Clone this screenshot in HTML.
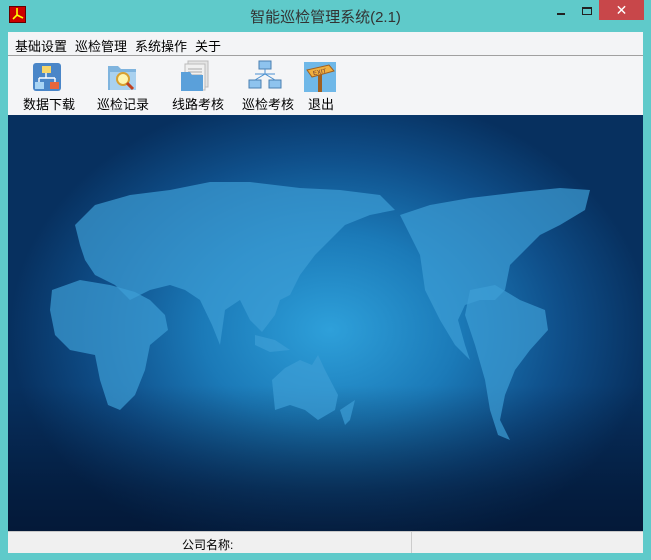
<!DOCTYPE html>
<html><head><meta charset="utf-8"><style>
*{margin:0;padding:0;box-sizing:border-box}
body{width:651px;height:560px;background:#5fcaca;position:relative;overflow:hidden;font-family:"Liberation Sans","Noto Sans CJK SC",sans-serif;font-size:12px;color:#000}
.abs{position:absolute}
.title{left:0;top:6px;width:651px;text-align:center;font-size:15px;color:#333}
.menu{left:8px;top:32px;width:635px;height:24px;background:#f3f4f6;border-bottom:1px solid #a0a0a0}
.menu span{position:absolute;top:4px;font-size:13px}
.tb{left:8px;top:56px;width:635px;height:59px;background:#f4f5f7}
.tb .lbl{position:absolute;top:38px;font-size:13px}
.map{left:8px;top:115px;width:635px;height:416px;background:linear-gradient(180deg,rgba(0,0,0,0) 0%,rgba(0,0,0,0) 65%,rgba(2,15,40,0.55) 90%,rgba(2,15,40,0.7) 100%),radial-gradient(ellipse 320px 240px at 322px 215px,#2ea0da 0%,#1b7ab8 40%,#0f4f8a 72%,#07305f 100%);overflow:hidden}
.status{left:8px;top:531px;width:635px;height:22px;background:#f0f0f0;border-top:1px solid #c8c8c8}
</style></head><body>
<div class="abs" style="left:9px;top:6px;width:17px;height:17px;background:#c00;border:1px solid #600"><svg width="15" height="15"><path d="M7 1V8L3 12M7 8L13 11" stroke="#ff0" stroke-width="1.6" fill="none"/></svg></div>
<div class="abs title">智能巡检管理系统(2.1)</div>
<div class="abs" style="left:557px;top:13px;width:8px;height:2px;background:#222"></div>
<div class="abs" style="left:582px;top:7px;width:10px;height:8px;border:1.5px solid #222;border-top-width:2px"></div>
<div class="abs" style="left:599px;top:0;width:45px;height:20px;background:#c8474a;color:#fff;text-align:center;font-size:14px;line-height:20px">✕</div>
<div class="abs menu"><span style="left:7px">基础设置</span><span style="left:67px">巡检管理</span><span style="left:127px">系统操作</span><span style="left:187px">关于</span></div>
<div class="abs tb">
<svg class="abs" style="left:24px;top:6px" width="30" height="30"><rect x="1" y="1" width="28" height="28" rx="3" fill="#4a86c8"/><rect x="10" y="4" width="9" height="7" fill="#f7d66a"/><path d="M14 11v5M7 16h16M7 16v4M23 16v4" stroke="#fff" stroke-width="1.4" fill="none"/><rect x="3" y="20" width="9" height="7" fill="#a8d4f4"/><rect x="18" y="20" width="9" height="7" fill="#e8663c"/></svg>
<svg class="abs" style="left:98px;top:6px" width="34" height="30"><path d="M2 4h10l3 3h15v21H2z" fill="#7fb4de"/><rect x="4" y="10" width="26" height="18" fill="#a9d1ef"/><circle cx="17" cy="17" r="6" fill="#fff6b0" stroke="#d8a030" stroke-width="2"/><path d="M21 21l6 6" stroke="#c04020" stroke-width="3"/></svg>
<svg class="abs" style="left:172px;top:4px" width="30" height="32"><rect x="8" y="1" width="20" height="26" fill="#e4e4e4" stroke="#bbb"/><rect x="5" y="4" width="20" height="26" fill="#f0f0f0" stroke="#bbb"/><path d="M8 9h14M8 12h14M8 15h14" stroke="#aaa"/><path d="M1 12h9l2 3h11v16H1z" fill="#5aa0da"/></svg>
<svg class="abs" style="left:240px;top:4px" width="34" height="32"><rect x="11" y="1" width="12" height="8" fill="#8ec3ee" stroke="#4a7fb0"/><rect x="1" y="20" width="12" height="8" fill="#8ec3ee" stroke="#4a7fb0"/><rect x="21" y="20" width="12" height="8" fill="#8ec3ee" stroke="#4a7fb0"/><path d="M17 9v5M7 20l10-6 10 6M7 14h20" stroke="#4a90d0" fill="none"/></svg>
<svg class="abs" style="left:296px;top:6px" width="32" height="30"><rect width="32" height="30" fill="#6fb8e8"/><path d="M14 10v20h4V10z" fill="#a06020"/><path d="M3 8l22-5 5 6-22 6z" fill="#f0b040" stroke="#a06020"/><text x="9" y="12" font-size="6" fill="#633" font-family="Liberation Sans" transform="rotate(-12 15 10)">EXIT</text></svg>
<span class="lbl" style="left:15px">数据下载</span><span class="lbl" style="left:89px">巡检记录</span><span class="lbl" style="left:164px">线路考核</span><span class="lbl" style="left:234px">巡检考核</span><span class="lbl" style="left:300px">退出</span>
</div>
<div class="abs map"><svg width="651" height="560" style="position:absolute;left:-8px;top:-115px"><g fill="#3d9ed6" fill-opacity="0.7">
<path d="M75 225L95 205L130 195L170 190L210 182L250 182L300 188L340 190L380 195L395 210L370 215L345 225L330 240L315 255L300 275L290 295L280 300L275 315L262 332L250 320L240 300L225 310L220 345L212 325L200 300L185 290L170 285L150 290L130 300L115 285L95 275L85 260L80 245Z"/>
<path d="M52 290L80 280L110 285L135 292L150 300L165 315L168 330L150 345L145 370L135 395L120 410L108 405L100 380L95 355L70 350L55 335L50 310Z"/>
<path d="M400 215L430 205L470 198L520 192L560 188L590 190L585 210L560 225L540 235L525 250L510 265L505 290L495 300L480 300L465 305L458 320L465 345L470 360L455 345L440 320L425 290L420 255L410 235Z"/>
<path d="M470 290L495 285L520 300L545 310L548 330L530 350L515 370L505 395L500 420L510 440L498 435L490 410L485 380L475 345L465 315Z"/>
<path d="M272 380L285 368L300 360L312 365L318 355L325 370L338 395L335 410L318 420L305 410L290 405L275 410Z"/>
<path d="M255 335L275 340L290 350L270 352L255 345Z"/><path d="M340 410L355 400L350 420L345 425Z"/>
</g></svg></div>
<div class="abs status"><span class="abs" style="left:174px;top:4px;font-size:12px">公司名称:</span><div class="abs" style="left:403px;top:0;width:1px;height:21px;background:#ccc"></div></div>
</body></html>
